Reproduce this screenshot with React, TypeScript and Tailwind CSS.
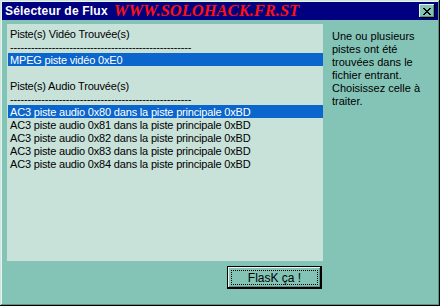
import React from "react";

const dashes = "-".repeat(52);

const rows: { text: string; sel?: boolean }[] = [
  { text: "Piste(s) Vidéo Trouvée(s)" },
  { text: dashes },
  { text: "MPEG piste vidéo 0xE0", sel: true },
  { text: "\u00a0" },
  { text: "Piste(s) Audio Trouvée(s)" },
  { text: dashes },
  { text: "AC3 piste audio 0x80 dans la piste principale 0xBD", sel: true },
  { text: "AC3 piste audio 0x81 dans la piste principale 0xBD" },
  { text: "AC3 piste audio 0x82 dans la piste principale 0xBD" },
  { text: "AC3 piste audio 0x83 dans la piste principale 0xBD" },
  { text: "AC3 piste audio 0x84 dans la piste principale 0xBD" },
];

export default function App() {
  return (
    <div
      className="w-[440px] h-[306px] bg-[#84c4b6] flex flex-col p-[2px] shadow-[inset_-1px_-1px_0_#000,inset_1px_1px_0_#cfe6e0,inset_-2px_-2px_0_#5a9488,inset_2px_2px_0_#e8f4f0] text-black"
      style={{ fontFamily: '"Liberation Sans", Arial, sans-serif' }}
    >
      <div className="h-[18px] bg-[#000080] flex items-center pl-[3px] pr-[3px]">
        <span className="text-white font-bold text-[12px] leading-none tracking-[0.2px]">Sélecteur de Flux</span>
        <span
          className="ml-[6px] text-[#ff1010] font-bold italic text-[16.5px] leading-none"
          style={{ fontFamily: '"Liberation Serif", "Times New Roman", serif' }}
        >
          WWW.SOLOHACK.FR.ST
        </span>
        <div className="ml-auto w-[16px] h-[14px] bg-[#84c4b6] shadow-[inset_-1px_-1px_0_#000,inset_1px_1px_0_#e8f4f0,inset_-2px_-2px_0_#5a9488] flex items-center justify-center">
          <svg width="8" height="7" viewBox="0 0 8 7">
            <path d="M0 0h2v1h1v1h2V1h1V0h2v1H7v1H6v1H5v1h1v1h1v1h1v1H6V6H5V5H3v1H2v1H0V6h1V5h1V4h1V3H2V2H1V1H0z" fill="#000" />
          </svg>
        </div>
      </div>
      <div className="flex flex-1 pt-[4px]">
        <div className="flex flex-col ml-[5px]">
          <div className="w-[316px] h-[237px] bg-[#c8e2da] pt-[3px] pl-[1px] text-[11px] leading-[13px]">
            {rows.map((r, i) => (
              <div
                key={i}
                className={
                  "h-[13px] pl-[2px] pt-[1px] whitespace-nowrap overflow-hidden tracking-[-0.18px] " +
                  (r.sel ? "bg-[#0a66cc] text-white" : "")
                }
              >
                {r.text}
              </div>
            ))}
          </div>
          <div className="flex justify-end mt-[5px] pr-[1px]">
            <div className="w-[95px] h-[23px] bg-[#84c4b6] border border-black shadow-[inset_-1px_-1px_0_#000,inset_1px_1px_0_#e8f4f0,inset_-2px_-2px_0_#5a9488] flex items-center justify-center p-[3px]">
              <div className="w-full h-full border border-dotted border-black flex items-center justify-center text-[12px] leading-none">
                FlasK ça !
              </div>
            </div>
          </div>
        </div>
        <div className="ml-[9px] pt-[6px] text-[11px] leading-[13px] w-[100px]">
          <div>Une ou plusieurs</div>
          <div>pistes ont été</div>
          <div>trouvées dans le</div>
          <div>fichier entrant.</div>
          <div>Choisissez celle à</div>
          <div>traiter.</div>
        </div>
      </div>
    </div>
  );
}
